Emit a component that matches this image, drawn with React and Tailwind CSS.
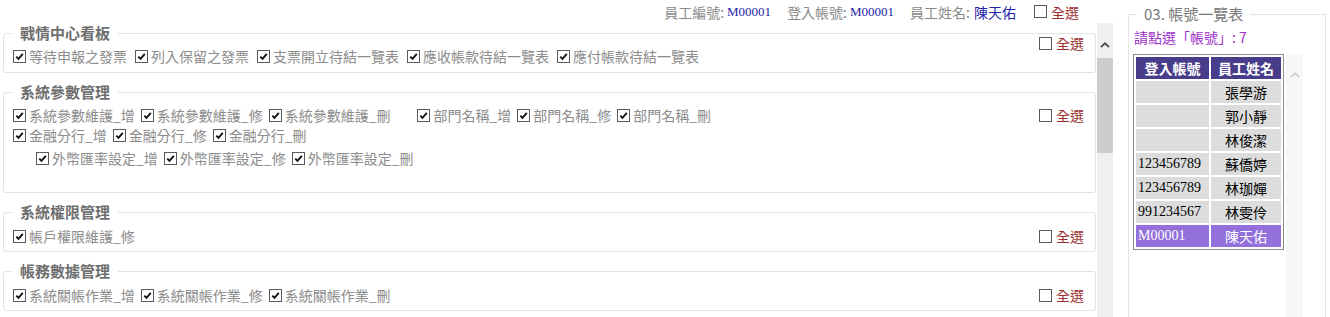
const cjk = "font-['Noto_Sans_CJK_TC',sans-serif]"
const serif = "font-['Liberation_Serif','Noto_Sans_CJK_TC',serif]"

const Check = ({ checked }) => (
  <span className="w-[13px] h-[13px] border border-[#5a5a5a] bg-white flex items-center justify-center shrink-0">
    {checked && (
      <svg width="9" height="9" viewBox="0 0 9 9">
        <path d="M1.3 4.6 L3.5 6.8 L7.8 1.9" stroke="#111" strokeWidth="1.9" fill="none" />
      </svg>
    )}
  </span>
)

const Item = ({ label }) => (
  <span className="flex items-center gap-[3px]">
    <Check checked />
    <span>{label}</span>
  </span>
)

const SelectAll = ({ className = '' }) => (
  <span className={`flex items-center gap-[4px] shrink-0 ${className}`}>
    <Check />
    <span className="text-[#9b2d2d]">全選</span>
  </span>
)

const Row = ({ items, className = '', tight }) => (
  <div className={`flex items-center ${tight ? 'gap-x-[6px]' : 'gap-x-[8px]'} ${className}`}>
    {items.map((t) => (
      <Item key={t} label={t} />
    ))}
  </div>
)

const Group = ({ title, className = '', bodyClass = '', allClass = '', children }) => (
  <fieldset className={`border border-[#e3e3e3] rounded-[3px] px-[8px] ${className}`}>
    <legend className="px-[8px] text-[15px] leading-[20px] font-bold text-[#6e6e6e]">{title}</legend>
    <div className="flex items-start">
      <div className={`flex-1 pl-[1px] ${bodyClass}`}>{children}</div>
      <SelectAll className={`mr-[3px] ${allClass}`} />
    </div>
  </fieldset>
)

const accounts = [
  { id: '', name: '張學游' },
  { id: '', name: '郭小靜' },
  { id: '', name: '林俊潔' },
  { id: '123456789', name: '蘇僑婷' },
  { id: '123456789', name: '林珈嬋' },
  { id: '991234567', name: '林雯伶' },
  { id: 'M00001', name: '陳天佑', active: true },
]

const Chevron = ({ color }) => (
  <svg width="10" height="6" viewBox="0 0 10 6">
    <path d="M1 5 L5 1.3 L9 5" stroke={color} strokeWidth="1.8" fill="none" />
  </svg>
)

export default function App() {
  return (
    <div className={`w-[1330px] h-[317px] overflow-hidden bg-white flex text-[14px] leading-[18px] ${cjk}`}>
      {/* left: permissions */}
      <div className="w-[1116px] flex flex-col shrink-0">
        <div className="h-[23px] flex items-center justify-end pr-[37px] text-[#8a8a8a]">
          <span>員工編號:</span>
          <span className={`ml-[3px] text-[13px] text-[#2424a8] ${serif}`}>M00001</span>
          <span className="ml-[16px]">登入帳號:</span>
          <span className={`ml-[3px] text-[13px] text-[#2424a8] ${serif}`}>M00001</span>
          <span className="ml-[16px]">員工姓名:</span>
          <span className="ml-[4px] text-[#2424a8]">陳天佑</span>
          <SelectAll className="ml-[18px]" />
        </div>
        <div className="flex flex-1 min-h-0">
          <div className="w-[1097px] pl-[3px] pr-[1px] overflow-hidden text-[#8c8c8c]">
            <Group title="戰情中心看板" bodyClass="pt-[4px] pb-[7px]" allClass="-mt-[9px]">
              <Row items={['等待申報之發票', '列入保留之發票', '支票開立待結一覽表', '應收帳款待結一覽表', '應付帳款待結一覽表']} />
            </Group>
            <Group title="系統參數管理" className="mt-[9px]" bodyClass="pt-[4px] pb-[25px]" allClass="mt-[4px]">
              <div className="flex items-center">
                <Row tight items={['系統參數維護_增', '系統參數維護_修', '系統參數維護_刪']} />
                <Row tight className="ml-[27px]" items={['部門名稱_增', '部門名稱_修', '部門名稱_刪']} />
              </div>
              <Row tight className="mt-[2px]" items={['金融分行_增', '金融分行_修', '金融分行_刪']} />
              <Row tight className="mt-[5px] pl-[23px]" items={['外幣匯率設定_增', '外幣匯率設定_修', '外幣匯率設定_刪']} />
            </Group>
            <Group title="系統權限管理" className="mt-[9px]" bodyClass="pt-[5px] pb-[6px]" allClass="mt-[5px]">
              <Row items={['帳戶權限維護_修']} />
            </Group>
            <Group title="帳務數據管理" className="mt-[9px]" bodyClass="pt-[5px] pb-[6px]" allClass="mt-[5px]">
              <Row tight items={['系統關帳作業_增', '系統關帳作業_修', '系統關帳作業_刪']} />
            </Group>
          </div>
          <div className="w-[16px] bg-[#f0f0f0] flex flex-col">
            <div className="h-[35px] flex justify-center pt-[19px]">
              <Chevron color="#505050" />
            </div>
            <div className="h-[95px] bg-[#cdcdcd]" />
          </div>
        </div>
      </div>

      {/* right: account list */}
      <div className="w-[198px] ml-[12px] pt-[4px] shrink-0">
        <fieldset className="border border-[#e3e3e3] h-[340px] pl-[4px]">
          <legend className="ml-[4px] px-[7px] text-[15px] leading-[20px] text-[#777]">03. 帳號一覽表</legend>
          <div className="pt-[4px] pl-[1px] text-[#9b30c8]">請點選「帳號」: 7</div>
          <div className="flex items-start mt-[8px]">
            <table className="border border-[#8e8e8e] border-separate border-spacing-[2px] bg-white">
              <thead>
                <tr>
                  <th className="w-[73px] h-[22px] p-0 bg-[#483d8b] text-white font-bold text-center">登入帳號</th>
                  <th className="w-[70px] h-[22px] p-0 bg-[#483d8b] text-white font-bold text-center">員工姓名</th>
                </tr>
              </thead>
              <tbody>
                {accounts.map((a) => (
                  <tr key={a.name}>
                    <td className={`h-[22px] p-0 pl-[2px] text-left ${serif} ${a.active ? 'bg-[#9370db] text-white' : 'bg-[#dcdcdc] text-black'}`}>{a.id}</td>
                    <td className={`h-[22px] p-0 text-center ${a.active ? 'bg-[#9370db] text-white' : 'bg-[#dcdcdc] text-black'}`}>{a.name}</td>
                  </tr>
                ))}
              </tbody>
            </table>
            <div className="ml-[2px] w-[17px] h-[280px] bg-[#f7f7f7] flex justify-center pt-[18px]">
              <Chevron color="#cfcfcf" />
            </div>
          </div>
        </fieldset>
      </div>
    </div>
  )
}
